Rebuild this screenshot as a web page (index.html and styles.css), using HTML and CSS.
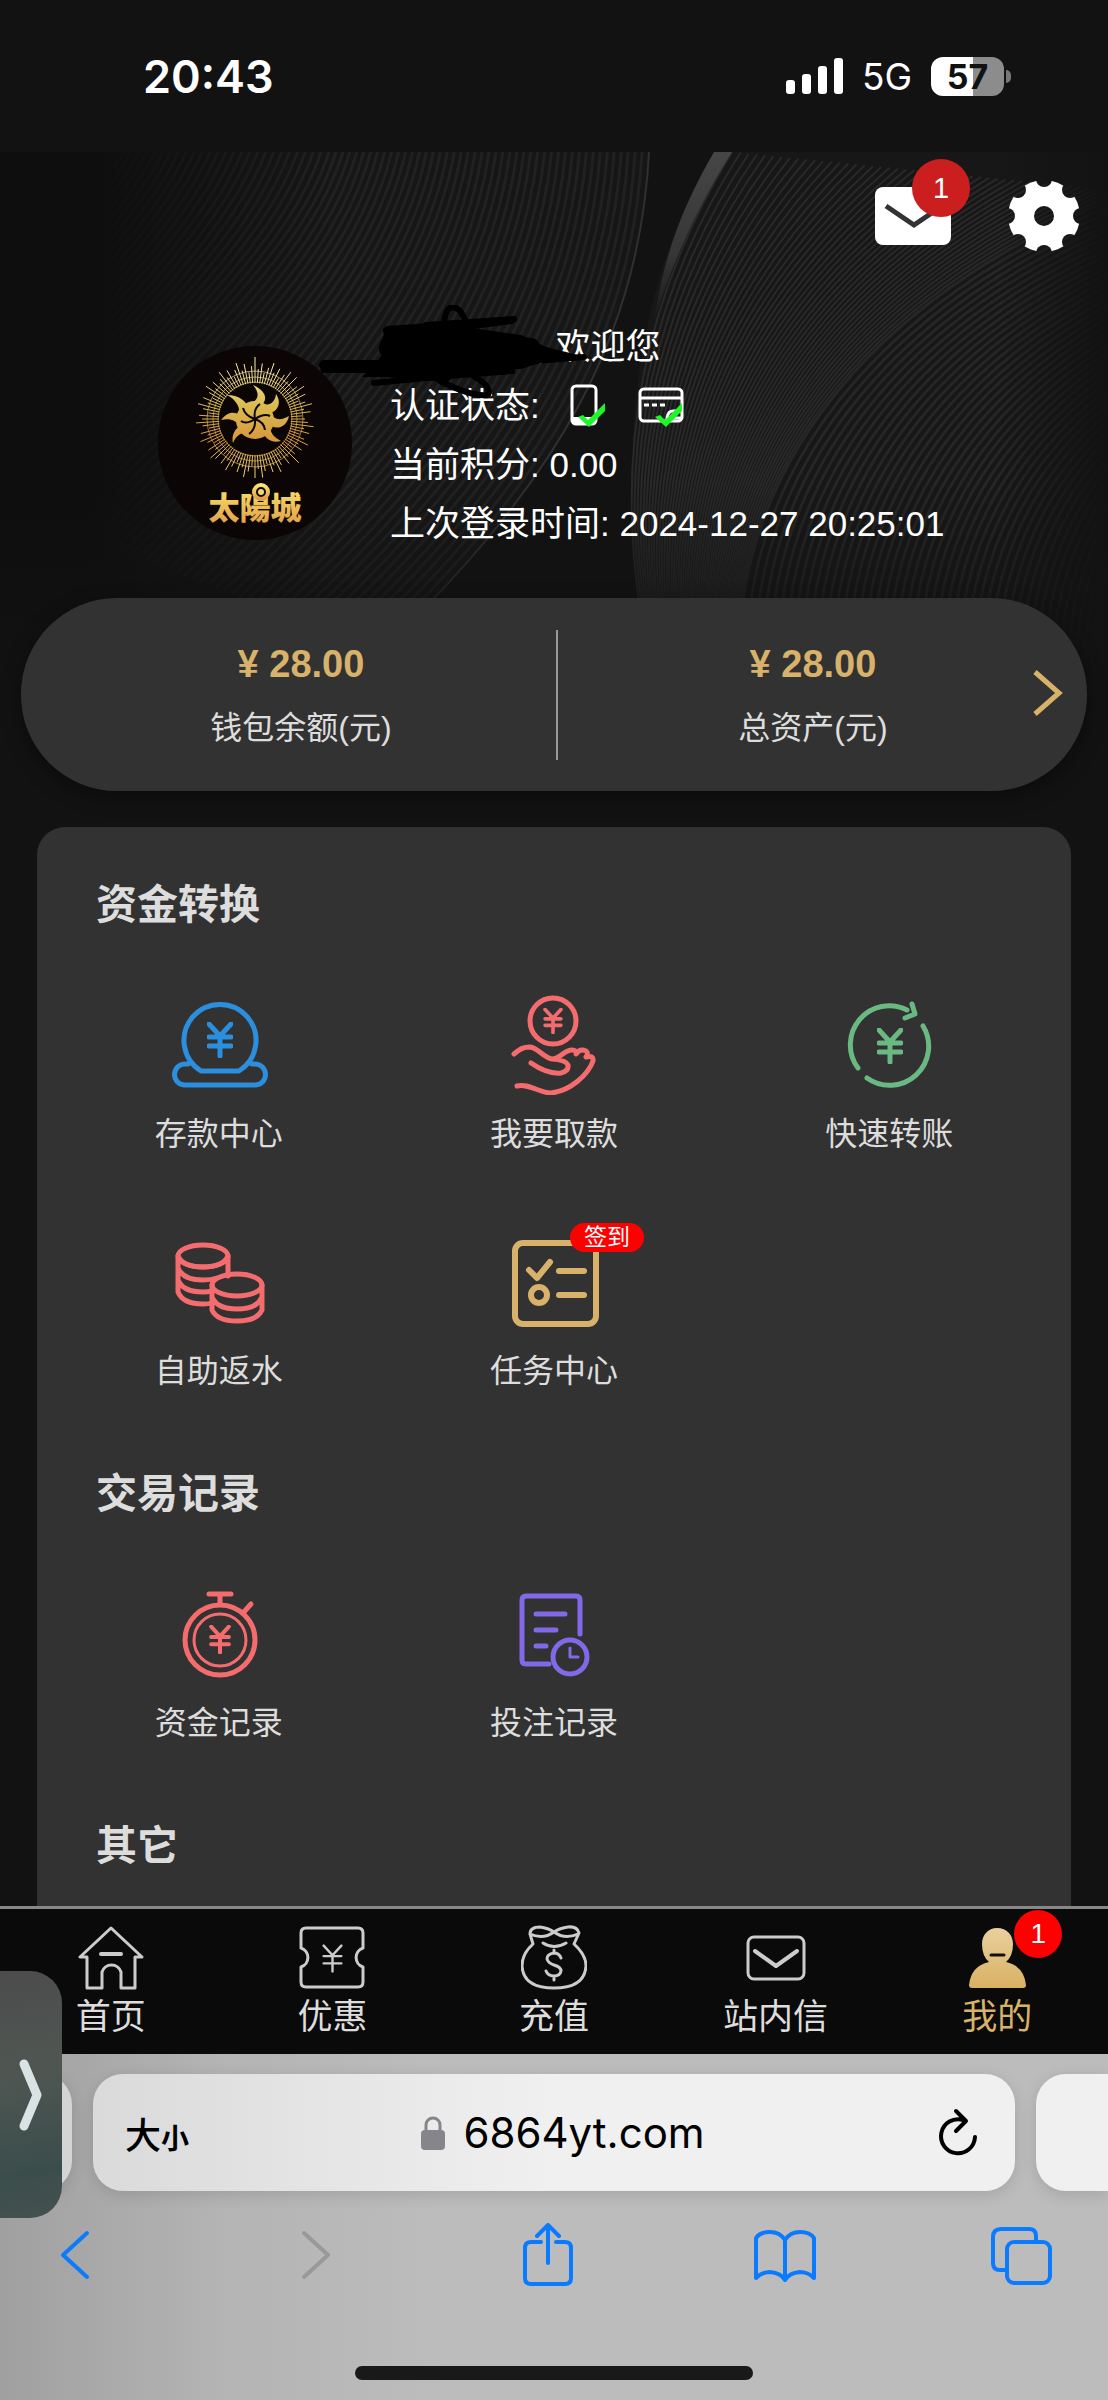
FILE: index.html
```
<!DOCTYPE html>
<html lang="zh-CN">
<head>
<meta charset="UTF-8">
<meta name="viewport" content="width=device-width, initial-scale=1">
<title>我的</title>
<link rel="stylesheet" href="styles.css">
</head>
<body>

<svg class="defs" aria-hidden="true">
<symbol id="yen" viewBox="0 0 26 36"><path d="M2 2l11 12L24 2M13 14v20M2 15h22M2 24h22"/></symbol>
</svg>

<div class="status">
<span class="clock">20:43</span>
<svg class="signal" viewBox="0 0 57 36"><rect x="0" y="22" width="9" height="14" rx="3"/><rect x="16" y="16" width="9" height="20" rx="3"/><rect x="32" y="8" width="9" height="28" rx="3"/><rect x="48" y="0" width="9" height="36" rx="3"/></svg>
<span class="net">5G</span>
<span class="battery">57</span>
</div>

<main class="page">
<section class="hero">
<svg class="waves" viewBox="0 0 1108 550" preserveAspectRatio="xMidYMin slice" aria-hidden="true">
<defs>
<linearGradient id="fade"><stop offset="0" stop-color="#0e0e0e"/><stop offset=".08" stop-color="#0e0e0e"/><stop offset=".3" stop-color="#0e0e0e" stop-opacity="0"/><stop offset=".9" stop-color="#121212" stop-opacity="0"/><stop offset="1" stop-color="#121212"/></linearGradient>
<linearGradient id="fadeDown" x2="0" y2="1"><stop offset=".6" stop-color="#121212" stop-opacity="0"/><stop offset="1" stop-color="#121212"/></linearGradient>
<linearGradient id="stripe" x2="0" y2="1"><stop offset="0" stop-color="#464646"/><stop offset=".6" stop-color="#363636"/><stop offset="1" stop-color="#181818"/></linearGradient>
</defs>
<path fill="#161616" d="M0 0H649C640 180 560 330 380 500L340 550H0z"/>
<path fill="#171717" d="M714 0C660 90 632 200 632 330C632 400 640 440 656 490L670 550H1108V0z"/>
<g id="lines"></g>
<path fill="url(#stripe)" d="M714 0H732C700 50 672 110 654 170C664 100 685 50 714 0z"/>
<rect width="1108" height="550" fill="url(#fade)"/>
<rect width="1108" height="550" fill="url(#fadeDown)"/>
</svg>

<div class="actions">
<button class="act" aria-label="站内信">
<svg width="76" height="58" viewBox="0 0 76 58"><rect width="76" height="58" rx="8" fill="#fff"/><path d="M11 19l28 19 28-19" fill="none" stroke="#333" stroke-width="5"/></svg>
<span class="badge">1</span>
</button>
<button class="act" aria-label="设置">
<svg width="72" height="72" viewBox="0 0 72 72">
<mask id="teeth"><rect width="72" height="72" fill="#fff"/><g fill="#000"><circle cx="36" cy="36" r="10"/><circle cx="36" cy="-1" r="8"/><circle cx="62" cy="10" r="8"/><circle cx="73" cy="36" r="8"/><circle cx="62" cy="62" r="8"/><circle cx="36" cy="73" r="8"/><circle cx="10" cy="62" r="8"/><circle cx="-1" cy="36" r="8"/><circle cx="10" cy="10" r="8"/></g></mask>
<circle cx="36" cy="36" r="36" fill="#fff" mask="url(#teeth)"/></svg>
</button>
</div>

<div class="profile">
<svg class="avatar" viewBox="0 0 195 195" role="img" aria-label="太陽城">
<defs><linearGradient id="gold" gradientUnits="userSpaceOnUse" x1="0" y1="14" x2="0" y2="128"><stop offset="0" stop-color="#fff3b8"/><stop offset=".4" stop-color="#d9bb4f"/><stop offset=".7" stop-color="#d9983f"/><stop offset="1" stop-color="#ecd575"/></linearGradient>
<linearGradient id="gold2" x2="0" y2="1"><stop offset="0" stop-color="#fbe96b"/><stop offset="1" stop-color="#e0994a"/></linearGradient></defs>
<circle cx="97" cy="97" r="97" fill="#0b0505"/>
<g fill="none" stroke="url(#gold)" stroke-width="1" opacity=".7"><circle cx="97" cy="73" r="37"/><circle cx="97" cy="73" r="42"/><circle cx="97" cy="73" r="48"/></g>
<g id="rays" stroke="url(#gold)" fill="none"></g>
<g fill="url(#gold)">
<circle cx="97" cy="74" r="19"/>
<path d="M92 58C101 54 102 47 95 39C107 44 111 53 103 60zM104 58C111 60 117 57 118 48C125 58 118 68 109 67zM112 67C116 74 123 75 131 70C129 80 120 85 112 79zM113 78C111 86 115 91 123 95C114 98 105 92 105 84zM91 87C84 85 78 90 75 97C73 90 77 80 86 79zM82 81C79 74 71 72 63 74C69 66 77 64 84 71zM81 71C83 63 79 54 69 49C82 49 90 56 91 65z"/>
</g>
<g fill="none" stroke="#0b0505" stroke-width="2"><path d="M97 73q-10-3-12-11M97 73q-2-10 5-15M97 73q9-6 15-3M97 73q9 3 10 11M97 73q1 10-6 15M97 73q-9 6-14 2"/></g>
<text x="97" y="173" text-anchor="middle" class="logotext" fill="url(#gold2)">太陽城</text>
<circle cx="103" cy="146" r="7" fill="#0b0505" stroke="url(#gold2)" stroke-width="4"/><circle cx="103" cy="146" r="3" fill="#f3d865"/>
</svg>
<div class="info">
<p class="hello">, 欢迎您</p>
<p class="auth">认证状态:
<svg width="38" height="46" viewBox="0 0 38 46"><rect x="2" y="3" width="24" height="38" rx="4" fill="none" stroke="#fff" stroke-width="3"/><path d="M2 34h24v7H2z" fill="#fff"/><path d="M8 34l5-2 5 5 17-17v8L19 44z" fill="#1ef52b"/></svg>
<svg width="46" height="46" viewBox="0 0 46 46"><rect x="2" y="6" width="42" height="32" rx="4" fill="none" stroke="#fff" stroke-width="3"/><path d="M2 15h42M6 22h5M14 22h5M22 22h5" stroke="#fff" stroke-width="3"/><path d="M44 28h-9q-5 0-6 7h15" stroke="#fff" stroke-width="3" fill="none"/><path d="M17 34l5-2 5 5 17-17v8L28 44z" fill="#1ef52b"/></svg>
</p>
<p>当前积分: 0.00</p>
<p>上次登录时间: 2024-12-27 20:25:01</p>
<svg class="scribble" viewBox="0 0 274 96" aria-hidden="true"><path d="M70 28Q58 44 66 50L60 58L46 72H120L150 64H205L236 54L262 50L230 42L205 30L150 22z"/><g fill="none" stroke="#000" stroke-linecap="round" stroke-linejoin="round"><path stroke-width="10" d="M8 60H60L190 64M72 26L130 22L150 28M220 50L200 36M60 66L130 72"/><path stroke-width="18" d="M76 34H150L215 42M76 48H205M70 62H140"/><path stroke-width="6" d="M128 22Q128 2 138 2Q146 4 152 22M110 20L198 14M118 26L196 16M8 65H60M58 78L120 72L196 66M124 76Q156 92 172 90Q176 80 152 68M220 56L268 52"/></g></svg>
</div>
</div>

<div class="wallet">
<div class="money"><strong>¥ 28.00</strong><span>钱包余额(元)</span></div>
<div class="money"><strong>¥ 28.00</strong><span>总资产(元)</span></div>
<a class="more" href="#assets" aria-label="资产详情"><svg width="30" height="48" viewBox="0 0 30 48"><path d="M2 2l24 21L2 44"/></svg></a>
</div>
</section>

<section class="panel">
<h2>资金转换</h2>
<div class="grid">
<a class="item blue" href="#deposit">
<svg viewBox="0 0 100 100"><path d="M32 76A36 36 0 1 1 70 76zM19 69h-3a10 10 0 0 0 0 21H86a10 10 0 0 0 0-21h-3"/><use href="#yen" x="38" y="27" width="26" height="36"/></svg>
<span>存款中心</span></a>
<a class="item red" href="#withdraw">
<svg viewBox="0 0 100 100"><circle cx="49" cy="26" r="23"/><use href="#yen" x="39" y="13" width="20" height="26"/><path d="M10 59C16 54 19 52 26 52C34 53 39 62 48 64C56 64 60 55 68 55Q73 55 72 59Q76 53 82 56Q85 58 82 62Q90 60 89 66C84 80 66 96 47 98C36 98 24 88 13 91M27 68C37 75 46 79 57 78Q65 76 64 70Q62 65 48 64"/></svg>
<span>我要取款</span></a>
<a class="item green" href="#transfer">
<svg viewBox="0 0 100 100"><path d="M19 73A39 39 0 0 1 68 15M73 9l3 10-10 4M84 31A39 39 0 0 1 28 83"/><use href="#yen" x="38" y="33" width="26" height="36"/></svg>
<span>快速转账</span></a>
<a class="item red" href="#rebate">
<svg viewBox="0 0 100 100"><ellipse cx="34" cy="24" rx="25" ry="11"/><path d="M9 24V60Q14 72 34 72Q40 72 43 71M59 24V44M9 36Q14 48 34 48Q42 48 48 46M9 48Q14 60 34 60Q39 60 43 59M9 24Q14 35 34 35Q54 35 59 24"/><ellipse cx="68" cy="53" rx="25" ry="11"/><path d="M43 53V78Q48 89 68 89Q88 89 93 78V53M43 65Q48 77 68 77Q88 77 93 65"/></svg>
<span>自助返水</span></a>
<a class="item gold" href="#task">
<span class="tip">签到</span>
<svg viewBox="0 0 100 100"><g stroke-width="6"><rect x="11" y="11" width="81" height="81" rx="8"/><path d="M25 38l8 8 13-16M55 39h25M55 63h25"/><circle cx="35" cy="63" r="8"/></g></svg>
<span>任务中心</span></a>
</div>

<h2>交易记录</h2>
<div class="grid">
<a class="item red" href="#funds">
<svg viewBox="0 0 100 100"><circle cx="51" cy="56" r="35"/><circle cx="51" cy="56" r="26" stroke-width="3"/><path d="M40 10h22M51 10v10M74 29l8-9"/><use href="#yen" x="40" y="41" width="22" height="29"/></svg>
<span>资金记录</span></a>
<a class="item purple" href="#bets">
<svg viewBox="0 0 100 100"><path d="M45 80H22Q18 80 18 76V16Q18 12 22 12H72Q76 12 76 16V50M32 30h29M32 46h20M32 62h10"/><circle cx="66" cy="73" r="17"/><path d="M66 64v9h8" stroke-width="3"/></svg>
<span>投注记录</span></a>
</div>

<h2>其它</h2>
</section>
</main>

<footer class="bottom">
<nav class="tabs">
<a href="#home"><svg viewBox="0 0 66 66"><path d="M33 4L2 33H9V64H24V48a10 10 0 0 1 19 0V64H57V33H64z"/><path d="M23 30h20" stroke-width="4"/></svg>首页</a>
<a href="#promo"><svg viewBox="0 0 66 66"><path d="M7 4H59Q64 4 64 9V24A10 10 0 0 0 64 43V58Q64 63 59 63H7Q2 63 2 58V43A10 10 0 0 0 2 24V9Q2 4 7 4z"/><use href="#yen" x="22" y="20" width="23" height="29"/></svg>优惠</a>
<a href="#pay"><svg viewBox="0 0 66 66"><path d="M12 20C3 28 1 35 1 42C2 57 14 64 33 64C52 64 64 57 65 42C65 35 62 28 53 20L58 9Q56 2 47 3Q39 4 33 8Q27 4 19 3Q9 3 9 10zM9 10Q22 16 33 8Q44 16 57 10M22 19Q33 26 45 19"/><path d="M40 34Q38 29 33 29Q26 30 26 35Q27 39 33 41Q40 43 40 47Q39 52 33 52Q27 52 25 47M33 26v3M33 52v4"/></svg>充值</a>
<a href="#mail"><svg viewBox="0 0 66 66"><rect x="5" y="13" width="56" height="42" rx="6"/><path d="M12 27l21 15 21-15" stroke-width="4"/></svg>站内信</a>
<a class="on" href="#me"><svg viewBox="0 0 66 66"><defs><linearGradient id="me" x2="0" y2="66" gradientUnits="userSpaceOnUse"><stop offset="0" stop-color="#ead2a2"/><stop offset="1" stop-color="#d8b061"/></linearGradient></defs><path fill="url(#me)" stroke="none" d="M33 4C43 4 49 11 49 20Q49 32 42 38Q60 42 62 61Q62 64 59 64H8Q5 64 5 61Q7 42 25 38Q18 32 18 20C18 11 24 4 33 4z"/><path d="M27 31h13" stroke="#111"/></svg>我的<span class="badge">1</span></a>
</nav>

<div class="browser">
<div class="address">
<span class="peek"></span>
<div class="urlbar">
<button class="size" aria-label="文字大小"><b>大</b><small>小</small></button>
<span class="url"><svg width="24" height="34" viewBox="0 0 24 34"><rect y="14" width="24" height="20" rx="4" fill="#85858b"/><path d="M5 15V9a7 7 0 0 1 14 0v6" fill="none" stroke="#85858b" stroke-width="3"/></svg>6864yt.com</span>
<button class="reload" aria-label="刷新"><svg width="42" height="50" viewBox="0 0 42 50"><path d="M26 12A17 17 0 1 0 38 29M19 3l10 10-10 10" fill="none" stroke="#000" stroke-width="4" stroke-linecap="round" stroke-linejoin="round"/></svg></button>
</div>
<span class="peek"></span>
</div>
<div class="tools">
<button aria-label="后退"><svg viewBox="0 0 64 64"><path d="M44 10L20 32l24 22"/></svg></button>
<button aria-label="前进" disabled><svg viewBox="0 0 64 64"><path d="M24 10l24 22-24 22"/></svg></button>
<button aria-label="分享"><svg viewBox="0 0 64 64"><path d="M25 19H15Q9 19 9 25V55Q9 61 15 61H49Q55 61 55 55V25Q55 19 49 19H40M32 40V3M21 13L32 2l11 11"/></svg></button>
<button aria-label="书签"><svg viewBox="0 0 64 64"><path d="M32 17Q27 9 17 9Q7 9 3 15V55Q9 49 17 49Q28 50 32 57Q36 50 47 49Q55 49 61 55V15Q57 9 47 9Q37 9 32 17zV57"/></svg></button>
<button aria-label="标签页"><svg viewBox="0 0 64 64"><rect x="18" y="19" width="43" height="41" rx="7"/><path d="M17 47H11Q4 47 4 40V14Q4 6 12 6H40Q47 6 47 13V18"/></svg></button>
</div>
<div class="homebar"></div>
</div>
<button class="drawer" aria-label="展开"><svg width="24" height="72" viewBox="0 0 24 72"><path d="M5 5l13 31L5 67"/></svg></button>
</footer>

<script src="script.js"></script>
</body>
</html>
```

FILE: styles.css
```
*{
	box-sizing:border-box;
}
html, body{
	height:100%;
	margin:0;
}
body{
	display:flex;
	flex-direction:column;
	background:#121212;
	color:#fff;
	font-family:"Liberation Sans", "Noto Sans CJK SC", sans-serif;
	font-size:32px;
}
a{
	color:inherit;
	text-decoration:none;
}
button{
	padding:0;
	border:0;
	background:none;
	color:inherit;
	font:inherit;
}
p, h2{
	margin:0;
}
svg{
	display:block;
	flex:none;
}
.defs{
	position:absolute;
	width:0;
	height:0;
}
.status{
	flex:none;
	display:flex;
	align-items:center;
	height:152px;
	padding:0 104px 0 143px;
	font-family:Inter, sans-serif;
}
.clock{
	margin-right:auto;
	font-size:45px;
	font-weight:600;
}
.signal{
	width:57px;
	height:36px;
	fill:#fff;
}
.net{
	margin:0 19px;
	font-size:37px;
}
.battery{
	position:relative;
	width:73px;
	height:39px;
	border-radius:12px;
	background:linear-gradient(90deg, #fff 57%, #8c8c8c 57%);
	color:#111;
	font-size:34px;
	font-weight:700;
	line-height:39px;
	text-align:center;
}
.battery::after{
	content:"";
	position:absolute;
	left:75px;
	top:13px;
	width:5px;
	height:13px;
	border-radius:0 5px 5px 0;
	background:#777;
}
.page{
	flex:1;
	min-height:0;
	overflow:hidden;
}
.hero{
	position:relative;
}
.waves{
	position:absolute;
	left:0;
	top:0;
	width:100%;
	height:550px;
}
.actions{
	position:relative;
	display:flex;
	align-items:center;
	justify-content:flex-end;
	gap:57px;
	padding:28px 28px 0;
}
.act{
	position:relative;
}
.badge{
	position:absolute;
	left:37px;
	top:-28px;
	width:58px;
	border-radius:50%;
	background:#cb1f1f;
	color:#fff;
	font-size:29px;
	line-height:58px;
	text-align:center;
}
.profile{
	position:relative;
	display:flex;
	gap:37px;
	padding:65px 40px 0 158px;
}
.avatar{
	width:195px;
	height:195px;
	margin-top:29px;
}
.logotext{
	font:900 31px "Noto Sans CJK TC", sans-serif;
}
.info{
	position:relative;
	font-size:35px;
	line-height:59px;
}
.hello{
	padding-left:146px;
}
.auth{
	display:flex;
	align-items:center;
	gap:30px;
}
.scribble{
	position:absolute;
	left:-74px;
	top:-12px;
	width:274px;
	height:96px;
}
.wallet{
	position:relative;
	display:flex;
	align-items:center;
	height:193px;
	margin:45px 21px 36px;
	padding:0 19px 0 17px;
	border-radius:96px;
	background:#323232;
	box-shadow:0 6px 20px rgba(0,0,0,.4);
}
.money{
	flex:1;
	display:flex;
	flex-direction:column;
	gap:16px;
	padding:10px 0 8px 8px;
	color:#ddd;
	line-height:48px;
	text-align:center;
}
.money + .money{
	padding-left:0;
	border-left:2px solid #999;
}
.money strong{
	color:#d8b26a;
	font-size:38px;
}
.more{
	position:absolute;
	right:24px;
	top:72px;
}
.more path{
	fill:none;
	stroke:#d8b26a;
	stroke-width:5;
}
.panel{
	position:relative;
	margin:0 37px;
	padding:47px 14px;
	border-radius:28px 28px 0 0;
	background:#323232;
	color:#ddd;
}
.panel h2{
	padding-left:45px;
	font-size:41px;
	font-weight:700;
	line-height:62px;
}
.grid + h2{
	margin-top:53px;
}
.grid{
	display:grid;
	grid-template-columns:repeat(3, 1fr);
}
.item{
	position:relative;
	display:flex;
	flex-direction:column;
	align-items:center;
	gap:15px;
	padding:59px 0 15px;
	line-height:48px;
}
.item svg{
	width:100px;
	height:100px;
	fill:none;
	stroke-width:5;
	stroke-linecap:round;
	stroke-linejoin:round;
}
.blue svg{stroke:#2b8fdd;}
.red svg{stroke:#f46c6e;}
.green svg{stroke:#6ab983;}
.gold svg{stroke:#d8b26a;}
.purple svg{stroke:#8169e8;}
.tip{
	position:absolute;
	left:calc(50% + 16px);
	top:50px;
	z-index:1;
	width:74px;
	border-radius:15px;
	background:#f00;
	color:#fff;
	font-size:23px;
	line-height:29px;
	text-align:center;
}
.bottom{
	position:relative;
	flex:none;
}
.tabs{
	display:flex;
	border-top:3px solid #888;
	background:#0a0a0a;
	color:#ddd;
}
.tabs a{
	position:relative;
	flex:1;
	display:flex;
	flex-direction:column;
	align-items:center;
	padding:15px 0 11px;
	font-size:35px;
	line-height:53px;
}
.tabs svg{
	width:66px;
	height:66px;
	fill:none;
	stroke:#ccc;
	stroke-width:3;
	stroke-linecap:round;
	stroke-linejoin:round;
}
.tabs .on{
	color:#d8b26a;
}
.tabs .badge{
	left:calc(50% + 17px);
	top:1px;
	width:48px;
	background:#f00;
	font-size:28px;
	line-height:48px;
}
.browser{
	padding-top:20px;
	background:linear-gradient(90deg, #a0a0a0, #b4b4b4 20%, #bcbcbc 40%);
}
.address{
	display:flex;
	gap:21px;
}
.urlbar, .peek{
	height:117px;
	border-radius:30px;
	background:#f0f0f0;
	box-shadow:0 4px 16px rgba(0,0,0,.12);
}
.peek{
	width:72px;
	border-radius:30px 0 0 30px;
}
.peek:first-child{
	border-radius:0 30px 30px 0;
	background:#d4d4d4;
}
.urlbar{
	flex:1;
	display:flex;
	align-items:center;
	justify-content:space-between;
	padding:0 36px 0 32px;
	background:linear-gradient(90deg, #dadada, #f0f0f0 50%);
	color:#000;
	font-family:Inter, "Noto Sans CJK SC", sans-serif;
}
.size b{
	font-size:36px;
	font-weight:500;
}
.size small{
	font-size:28px;
	font-weight:700;
}
.url{
	display:flex;
	align-items:center;
	gap:18px;
	font-size:42px;
}
.tools{
	display:flex;
	justify-content:space-between;
	padding:32px 55px 0 43px;
}
.tools svg{
	width:64px;
	height:64px;
	fill:none;
	stroke:#0a7aff;
	stroke-width:4;
	stroke-linecap:round;
	stroke-linejoin:round;
}
.tools :disabled svg{
	stroke:#999;
}
.homebar{
	width:36%;
	height:14px;
	margin:79px auto 0;
	border-radius:7px;
	background:#191919;
}
.browser::after{
	content:"";
	display:block;
	height:20px;
}
.drawer{
	position:absolute;
	left:0;
	top:65px;
	display:flex;
	align-items:center;
	width:62px;
	height:247px;
	padding-left:19px;
	border-radius:0 32px 32px 0;
	background:linear-gradient(170deg, #4c4c4c, #4f5652 40%, #3b4d4b 80%, #44514f);
}
.drawer path{
	fill:none;
	stroke:#d9e2e4;
	stroke-width:9;
	stroke-linecap:round;
	stroke-linejoin:round;
}
```

FILE: script.js
```
var NS = 'http://www.w3.org/2000/svg';
function addPath(parent, d, color, width)
{
    var p = document.createElementNS(NS, 'path');
    p.setAttribute('d', d);
    p.setAttribute('fill', 'none');
    if (color) p.setAttribute('stroke', color);
    p.setAttribute('stroke-width', width);
    parent.appendChild(p);
}
// fills the space between two cubic curves with n thin lines
function family(a, b, n, color, width)
{
    var g = document.getElementById('lines');
    for (var i = 0; i < n; i++)
    {
        var c = a.map(function(v, k) { return Math.round((v + (b[k] - v) * i / n) * 10) / 10; });
        addPath(g, 'M' + c[0] + ' ' + c[1] + 'C' + c.slice(2).join(' '), color, width);
    }
}
var left = [60, 0, 20, 60, -60, 140, -160, 260];
var mid = [329, 0, 300, 90, 200, 190, 20, 360];
var edge = [649, 0, 640, 180, 560, 330, 380, 500];
family(left, mid, 34, '#212121', 3);
family(mid, edge, 46, '#212121', 3);
family(edge, edge, 1, '#303030', 2);
var r1 = [732, 0, 640, 150, 600, 330, 660, 550];
var r2 = [1130, 40, 900, 130, 720, 300, 740, 550];
family(r1, r2, 48, '#292929', 2);
family(r2, r2, 1, '#3e3e3e', 2);
family(r2, [1400, 200, 1180, 260, 1090, 380, 1100, 550], 46, '#262626', 3);

// sun rays of the logo
var rays = document.getElementById('rays');
for (var i = 0; i < 96; i++)
{
    var t = i / 96 * Math.PI * 2;
    var len = 47 + (i * 7 % 5) * 3 + (i % 12 == 0 ? 3 : 0);
    var x1 = 97 + 36 * Math.cos(t), y1 = 73 + 36 * Math.sin(t);
    var x2 = 97 + len * Math.cos(t), y2 = 73 + len * Math.sin(t);
    addPath(rays, 'M' + x1.toFixed(1) + ' ' + y1.toFixed(1) + 'L' + x2.toFixed(1) + ' ' + y2.toFixed(1), '', 1);
}
```
